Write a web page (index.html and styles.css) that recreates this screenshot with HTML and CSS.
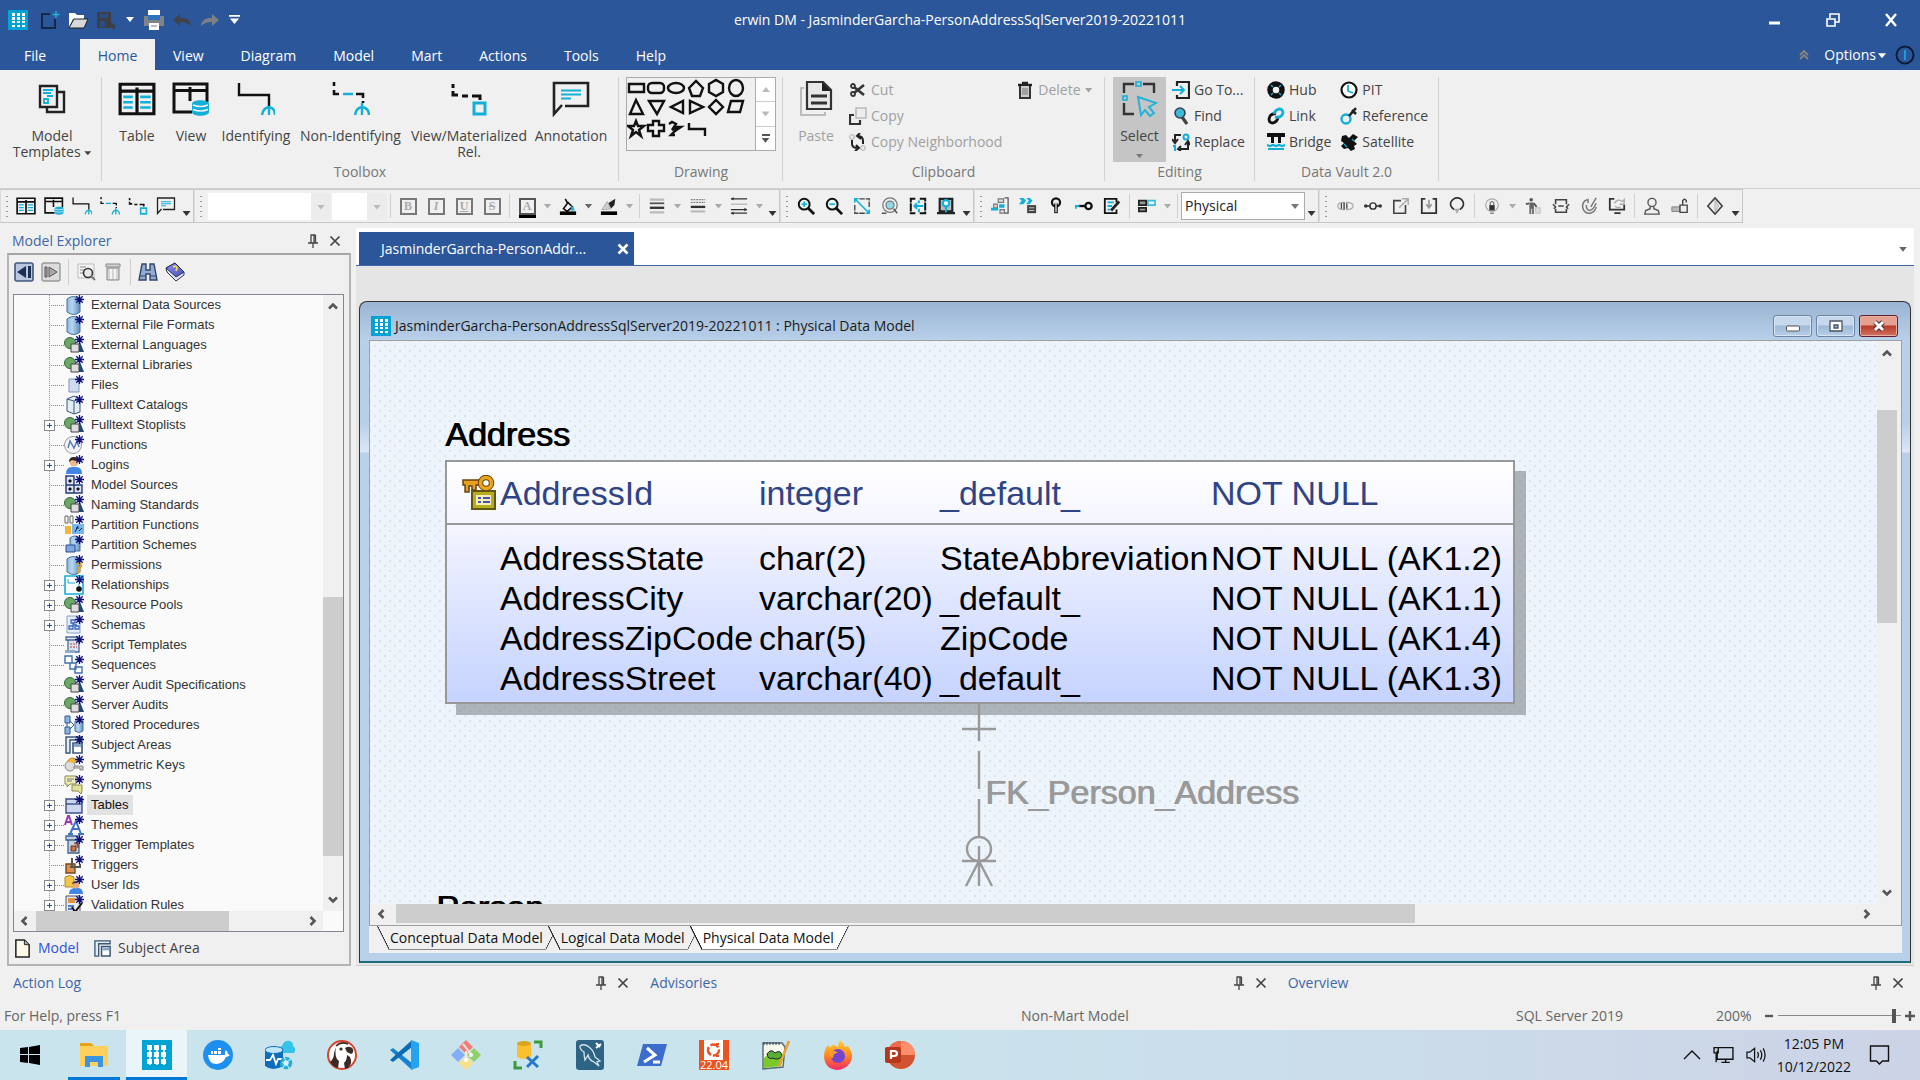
FILE: index.html
```html
<!DOCTYPE html>
<html lang="en">
<head>
<meta charset="utf-8">
<title>erwin DM - JasminderGarcha-PersonAddressSqlServer2019-20221011</title>
<link rel="stylesheet" href="styles.css">
</head>
<body>
<svg class="defs" aria-hidden="true">
  <defs>
    <linearGradient id="g-blue" x1="0" x2="1"><stop offset="0" stop-color="#8fb8dc"/><stop offset=".4" stop-color="#b5d6f0"/><stop offset="1" stop-color="#5f8fbf"/></linearGradient>
    <linearGradient id="g-book" x1="0" x2="1" y2="1"><stop offset="0" stop-color="#8b90ee"/><stop offset="1" stop-color="#4a50b8"/></linearGradient>
    <linearGradient id="g-fox" x1="0" x2="0" y2="1"><stop offset="0" stop-color="#ffd23a"/><stop offset=".5" stop-color="#ff8a1e"/><stop offset="1" stop-color="#f0296b"/></linearGradient>
  </defs>
  <symbol id="logo" viewBox="0 0 20 20"><path fill="#00a3d3" d="M0 0h20v20H0z"/><path fill="#fff" d="M4 3h3v3H4zM9 3h3v3H9zM14 3h3v3h-3zM4 7h3v3H4zM9 7h3v3H9zM14 7h3v3h-3zM4 11h3v2H4zM9 11h3v2H9zM14 11h3v2h-3zM4 15h3v2H4zM9 15h3v2H9zM14 15h3v2h-3z"/></symbol>
  <symbol id="pin" viewBox="0 0 12 14"><path d="M3.500 1h5M4 1v8M7 1v8M8.500 1v8M1 9h10M6 9v5" fill="none" stroke="#444" stroke-width="1.300"/></symbol>
  <symbol id="cross" viewBox="0 0 12 12"><path d="M1.500 1.500l9 9M10.500 1.500l-9 9" fill="none" stroke="currentColor" stroke-width="1.700"/></symbol>
  <symbol id="crossb" viewBox="0 0 12 12"><path d="M1.500 1.500l9 9M10.500 1.500l-9 9" fill="none" stroke="currentColor" stroke-width="2.600"/></symbol>
  <symbol id="chev" viewBox="0 0 12 12"><path d="M2 8.500l4-4 4 4" fill="none" stroke="#555" stroke-width="2.600"/></symbol>

  <symbol id="i-table" viewBox="0 0 36 32"><path d="M2 2h32v28H2zM2 8.500h32M18 5v24" fill="none" stroke="#111" stroke-width="3"/><path d="M5 14h9M5 19h9M5 24h9M21 14h10M21 19h10M21 24h10" stroke="#12b0d8" stroke-width="2.400"/></symbol>
  <symbol id="i-view" viewBox="0 0 38 34"><path d="M20 30H2V2h33v18M2 8.500h33M18 5v14" fill="none" stroke="#111" stroke-width="3"/><path d="M20 22c0-5 17-5 17 0v8c0 5-17 5-17 0z" fill="#12b0d8"/><path d="M21 23q7.500 3 15 0M21 27.500q7.500 3 15 0" fill="none" stroke="#f0f0f0" stroke-width="1.500"/></symbol>
  <symbol id="i-ident" viewBox="0 0 38 34"><path d="M2 1v12h30v11" fill="none" stroke="#111" stroke-width="2.400"/><path d="M32 24v9M25 33q1-7 7-8 6 1 6 8" fill="none" stroke="#12b0d8" stroke-width="2.400"/></symbol>
  <symbol id="i-nident" viewBox="0 0 38 34"><path d="M2 0v4M2 8v4h5M24 12h7v4M31 19v2" fill="none" stroke="#111" stroke-width="2.600"/><path d="M11 12h10M30 21v12M23 33q1-7 7-8 7 1 7 8" fill="none" stroke="#12b0d8" stroke-width="2.400"/></symbol>
  <symbol id="i-vrel" viewBox="0 0 38 34"><path d="M3 2v4M3 9v4h5M12 14h6M22 14h8v4" fill="none" stroke="#111" stroke-width="3"/><path d="M24 21h11v11H24z" fill="none" stroke="#12b0d8" stroke-width="3"/></symbol>
  <symbol id="i-note" viewBox="0 0 38 36"><path d="M13 25h23V2H2v31l8-9" fill="none" stroke="#222" stroke-width="2.600"/><path d="M9 9.500h20M9 13.500h20M9 17.500h10" stroke="#12b0d8" stroke-width="2"/></symbol>
  <symbol id="i-tmpl" viewBox="0 0 28 30"><path d="M2 2h17v21H2zM20 8h6v20H9v-5" fill="none" stroke="#222" stroke-width="2.400"/><path d="M5 6h10M5 9h8M9 12h6M6 15h4v4H6z" fill="none" stroke="#12b0d8" stroke-width="1.800"/></symbol>
  <symbol id="i-paste" viewBox="0 0 32 36"><path d="M4 7H1v27h24v-3" fill="none" stroke="#bbb" stroke-width="2"/><path d="M7 1h16l8 8v19H7z" fill="#e8e8e8" stroke="#333" stroke-width="2.200"/><path d="M22 1v9h9z" fill="#222"/><path d="M11 15h16M11 22h16" stroke="#333" stroke-width="3"/></symbol>
  <symbol id="i-cut" viewBox="0 0 18 18"><path d="M5 6l10 8M5 12l10-8" stroke="#333" stroke-width="2.600"/><circle cx="4" cy="5" r="2" fill="none" stroke="#333" stroke-width="1.800"/><circle cx="4" cy="13" r="2" fill="none" stroke="#333" stroke-width="1.800"/></symbol>
  <symbol id="i-copy" viewBox="0 0 18 18"><path d="M7 1h10v10H7z" fill="#eee" stroke="#bbb" stroke-width="1.600"/><path d="M5 8H1v9h10v-4" fill="none" stroke="#333" stroke-width="2.200"/></symbol>
  <symbol id="i-copyn" viewBox="0 0 18 18"><path d="M3 7v4q0 4 6 4M7 12l3 3-4 3M14 11V8q0-5-5-5M11 0L8 3l4 3" fill="none" stroke="#222" stroke-width="2"/><circle cx="3" cy="4" r="2.300" fill="none" stroke="#aaa"/><circle cx="14" cy="15" r="2.300" fill="none" stroke="#aaa"/></symbol>
  <symbol id="i-trash" viewBox="0 0 16 18"><path d="M1 4h14M5 2h6" stroke="#222" stroke-width="2.400"/><path d="M3 5v12h10V5" fill="#ccc" stroke="#333" stroke-width="2"/><path d="M6 7v7M8 7v7M10 7v7" stroke="#777"/></symbol>
  <symbol id="i-select" viewBox="0 0 36 36"><path d="M2 12V3h10M21 3h11v9M2 22v11h10" fill="none" stroke="#333" stroke-width="2.400"/><path d="M14 1h5v4h-5zM1 15h4v4H1z" fill="none" stroke="#12b0d8" stroke-width="1.600"/><path d="M16 16l18 6-7 4 5 6-4 3-5-6-4 5z" fill="none" stroke="#25b3d8" stroke-width="2"/></symbol>
  <symbol id="i-goto" viewBox="0 0 18 18"><path d="M5 5V1h12v16H5v-3" fill="none" stroke="#222" stroke-width="2.200"/><path d="M0 9h12M8 5l4 4-4 4" fill="none" stroke="#12b0d8" stroke-width="2"/></symbol>
  <symbol id="i-find" viewBox="0 0 18 18"><circle cx="8" cy="6" r="5" fill="#40b8d8" stroke="#345" stroke-width="1.600"/><path d="M10 10l5 7" stroke="#444" stroke-width="3.200"/></symbol>
  <symbol id="i-repl" viewBox="0 0 18 18"><path d="M9 2H3v6M0 6l3 4 3-4M8 16h8v-6M13 12l3-4 2 4M9 13l-3 3 3 2" fill="none" stroke="#222" stroke-width="2"/><circle cx="14" cy="4" r="2.500" fill="none" stroke="#12b0d8" stroke-width="2"/><path d="M3 12v6M1 13h2" fill="none" stroke="#12b0d8" stroke-width="2"/></symbol>
  <symbol id="i-hub" viewBox="0 0 18 18"><circle cx="9" cy="9" r="6" fill="none" stroke="#111" stroke-width="5.500"/><path d="M4 4l2 2M14 4l-2 2M4 14l2-2M14 14l-2-2" stroke="#12b0d8" stroke-width="1.400"/></symbol>
  <symbol id="i-link" viewBox="0 0 18 18"><path d="M9 7q-4-1-6 2l-1 3q0 4 4 4 4-1 5-5" fill="none" stroke="#111" stroke-width="2.800"/><path d="M8 10q5 1 7-2l1-2q0-4-4-4-4 1-5 5" fill="none" stroke="#12b0d8" stroke-width="2.800"/></symbol>
  <symbol id="i-bridge" viewBox="0 0 18 18"><path d="M0 0h18v4H0zM4 4h3v6H4zM11 4h3v6h-3z" fill="#111"/><path d="M0 12l3 1 3-1 3 1 3-1 3 1 3-1M1 16h16" fill="none" stroke="#12b0d8" stroke-width="2.200"/></symbol>
  <symbol id="i-pit" viewBox="0 0 18 18"><circle cx="9" cy="9" r="7.500" fill="#fff" stroke="#111" stroke-width="2.200"/><path d="M8 4v6l5 2" fill="none" stroke="#12b0d8" stroke-width="1.800"/></symbol>
  <symbol id="i-ref" viewBox="0 0 18 18"><circle cx="6" cy="12" r="4.500" fill="none" stroke="#12b0d8" stroke-width="2.400"/><path d="M9 9l7-8M12 3l4 4" stroke="#222" stroke-width="2.600"/></symbol>
  <symbol id="i-sat" viewBox="0 0 18 18"><path d="M2 3l4-1 3 3 4-4 5 3-4 4 3 3-3 2 1 3-4 2-3-3-4 1-3-3 3-3-3-2z" fill="#111"/><path d="M4 11l3 3M12 6l2 2" stroke="#12b0d8" stroke-width="1.200"/></symbol>

  <symbol id="s-mag" viewBox="0 0 20 20"><circle cx="8" cy="8" r="6" fill="#e8f6fb" stroke="#111" stroke-width="2.200"/><path d="M12 12l7 7" stroke="#111" stroke-width="3"/><path d="M5 8h6" stroke="#12b0d8" stroke-width="1.800"/></symbol>
  <symbol id="s-frame" viewBox="0 0 20 20"><path d="M7 2h11v10M2 9v9h11" fill="none" stroke="#444" stroke-width="1.500" stroke-dasharray="6 1"/><path d="M2 2l16 16M2 6V2h4M18 14v4h-4" fill="none" stroke="#12b0d8" stroke-width="1.800"/></symbol>
  <symbol id="s-fit" viewBox="0 0 20 20"><circle cx="10" cy="9" r="8" fill="none" stroke="#777" stroke-width="1.400"/><circle cx="10" cy="9" r="4.500" fill="#8fd8ec" stroke="#777" stroke-width="1.300"/><path d="M14 13l4 5M1 18h5" stroke="#555" stroke-width="1.600"/></symbol>
  <symbol id="s-pan" viewBox="0 0 20 20"><path d="M7 2H2v16h5M12 2h6v16h-6" fill="none" stroke="#111" stroke-width="2.200" stroke-dasharray="9 1"/><path d="M16 10H6M9 7l-3 3 3 3M11 4v3M11 13v4" fill="none" stroke="#12b0d8" stroke-width="2.200"/></symbol>
  <symbol id="s-over" viewBox="0 0 20 20"><path d="M3 2h14v14H3zM0 18h20" fill="#bbb" stroke="#222" stroke-width="2.400"/><circle cx="10" cy="7" r="3.600" fill="#fff" stroke="#12b0d8" stroke-width="2.400"/><path d="M10 11v6" stroke="#12b0d8" stroke-width="2.400"/></symbol>
  <symbol id="s-lines" viewBox="0 0 20 20"><path d="M2 3h16M2 17h16" stroke="#bbb" stroke-width="2.400"/><path d="M2 7h16" stroke="#555" stroke-width="2"/><path d="M2 12h16" stroke="#333" stroke-width="2.600"/></symbol>
  <symbol id="s-dash" viewBox="0 0 20 20"><path d="M2 3h16M2 6h16" stroke="#555" stroke-dasharray="2 1"/><path d="M2 11h16" stroke="#333" stroke-width="2.600"/><path d="M2 16h16" stroke="#bbb" stroke-width="2.400"/></symbol>
  <symbol id="s-arrows" viewBox="0 0 20 20"><path d="M1 2h18M1 14h18M1 18h18" stroke="#333" stroke-width="1.400"/><path d="M1 8h18" stroke="#bbb" stroke-width="1.600"/><path d="M1 2l3-2v4zM19 14l-3-2v4zM1 18l3-2v4z" fill="#333"/></symbol>
  <symbol id="s-tree" viewBox="0 0 20 20"><path d="M8 2h6v4H8zM3 8h4v4H3zM10 14h5v4h-5z" fill="#ddd" stroke="#777" stroke-width="1.300"/><path d="M15 1h4v17h-4" fill="none" stroke="#555" stroke-width="1.400"/><path d="M9 8h6v4H9zM0 12h8v3H0z" fill="#12b0d8"/></symbol>
  <symbol id="s-trans" viewBox="0 0 20 20"><path d="M0 1h5l3 3-3 4H0l3-4zM8 1h4l3 3-3 4H8l3-4z" fill="#12b0d8"/><path d="M9 9h10v9H9z" fill="#444"/><path d="M11 12h6M11 15h6" stroke="#ccc"/></symbol>
  <symbol id="s-keyv" viewBox="0 0 20 20"><circle cx="10" cy="6" r="4.500" fill="none" stroke="#111" stroke-width="2.400"/><path d="M10 7v11" stroke="#111" stroke-width="4"/><path d="M10 5v12" stroke="#ddd" stroke-width="1.500"/></symbol>
  <symbol id="s-keyh" viewBox="0 0 20 20"><circle cx="15" cy="10" r="3.500" fill="none" stroke="#111" stroke-width="2.600"/><path d="M4 10h8" stroke="#111" stroke-width="2.600"/><path d="M1 13v-3h4" fill="none" stroke="#12b0d8" stroke-width="2"/></symbol>
  <symbol id="s-edit" viewBox="0 0 20 20"><path d="M15 6V2H2v16h13v-4" fill="none" stroke="#111" stroke-width="2"/><path d="M5 6h7M5 10h5M5 14h3" stroke="#12b0d8" stroke-width="2"/><path d="M9 15l9-10" stroke="#222" stroke-width="3"/></symbol>
  <symbol id="s-align" viewBox="0 0 20 20"><path d="M1 4h8v5H1zM1 12h8v4H1z" fill="#999" stroke="#222" stroke-width="2"/><path d="M11 4h8v5h-8z" fill="#e8f8fc" stroke="#3abbe0" stroke-width="1.800"/></symbol>
  <symbol id="s-toggle" viewBox="0 0 20 20"><path d="M9 6Q2 6 2 10t7 4zM11 6q8 0 8 4t-8 4" fill="none" stroke="#aaa" stroke-width="1.300"/><path d="M6 7v6M9 6v8M12 7v6" stroke="#444" stroke-width="1.400"/></symbol>
  <symbol id="s-node" viewBox="0 0 20 20"><circle cx="10" cy="10" r="3.500" fill="none" stroke="#333" stroke-width="1.600"/><path d="M3 10h4M13 10h4" stroke="#333" stroke-width="1.600"/><circle cx="2" cy="10" r="2" fill="#333"/><circle cx="18" cy="10" r="2" fill="#333"/></symbol>
  <symbol id="s-out" viewBox="0 0 20 20"><path d="M10 4H2v14h13V9" fill="none" stroke="#444" stroke-width="1.800"/><path d="M8 12l9-9M11 2h7v7" fill="none" stroke="#aaa" stroke-width="1.600"/></symbol>
  <symbol id="s-in" viewBox="0 0 20 20"><path d="M6 2H2v16h16V2h-4" fill="none" stroke="#333" stroke-width="2"/><path d="M10 3v8M7 8l3 4 3-4" fill="none" stroke="#999" stroke-width="1.800"/></symbol>
  <symbol id="s-bulb" viewBox="0 0 20 20"><path d="M7 14Q2 11 3 6q3-5 7-5 5 0 7 5 1 5-4 8" fill="none" stroke="#333" stroke-width="1.800"/><path d="M7 13h6l-3 6z" fill="#aaa"/></symbol>
  <symbol id="s-lock" viewBox="0 0 20 20"><circle cx="10" cy="9" r="7" fill="none" stroke="#aaa" stroke-width="1.300"/><path d="M7 9h6v6H7z" fill="#333"/><path d="M8 9V6q2-2 4 0v3M8 18h4" fill="none" stroke="#444"/></symbol>
  <symbol id="s-man" viewBox="0 0 20 20"><circle cx="8" cy="3" r="2" fill="#555"/><path d="M6 6h5v13H9v-6H8v6H6z" fill="#666"/><path d="M2 8l4-1M11 7l3 4" stroke="#555" stroke-width="2"/><path d="M13 12h5v6h-5z" fill="#ddd" stroke="#bbb"/></symbol>
  <symbol id="s-print" viewBox="0 0 20 20"><path d="M4 8V3h12v5M4 13v4h12v-4" fill="none" stroke="#444" stroke-width="1.800"/><path d="M1 8l3 3-2 2M19 8l-3 3 2 2M7 10h6" fill="none" stroke="#444" stroke-width="1.600"/></symbol>
  <symbol id="s-spiral" viewBox="0 0 20 20"><path d="M8 3Q2 5 3 12q2 7 9 6 5-2 6-7M7 9q0 6 4 6 4-1 7-8M9 2v5M12 11l6-10" fill="none" stroke="#777" stroke-width="1.600"/></symbol>
  <symbol id="s-mon" viewBox="0 0 20 20"><path d="M7 2H2v12h16V8M7 18h7" fill="none" stroke="#333" stroke-width="2"/><path d="M7 7q4-6 9-2l2-2v5h-5M14 11q-4 2-6-1" fill="none" stroke="#aaa" stroke-width="1.500"/></symbol>
  <symbol id="s-user" viewBox="0 0 20 20"><circle cx="10" cy="6" r="4.500" fill="none" stroke="#555" stroke-width="1.500"/><path d="M8 10v3l-5 2-1 4h16l-1-4-5-2v-3" fill="none" stroke="#555" stroke-width="1.500"/></symbol>
  <symbol id="s-unlock" viewBox="0 0 20 20"><path d="M1 11h9v5H1z" fill="#bbb" stroke="#777"/><path d="M10 9h8v8h-8z" fill="#eee" stroke="#444" stroke-width="1.500"/><path d="M13 9V4q2-3 4 0v2" fill="none" stroke="#444" stroke-width="1.600"/></symbol>
  <symbol id="s-dia" viewBox="0 0 20 20"><path d="M10 1l8 9-8 9-8-9z" fill="none" stroke="#444" stroke-width="1.800"/><path d="M10 4v12l4-6z" fill="#ddd" stroke="#aaa"/></symbol>
  <symbol id="s-fill" viewBox="0 0 20 20"><path d="M7 2l3 6M5 13l5-7 5 5-6 5z" fill="none" stroke="#111" stroke-width="1.800"/><path d="M14 9l4 6h-5z" fill="#12b0d8"/><path d="M1 18h18" stroke="#000" stroke-width="4"/></symbol>
  <symbol id="s-brush" viewBox="0 0 20 20"><path d="M9 7l8-5-1 7-4 4z" fill="#222"/><path d="M2 14l6-9 4 8-4 1z" fill="#ccc" stroke="#aaa"/><path d="M1 18h18" stroke="#000" stroke-width="4"/></symbol>

  <symbol id="star" viewBox="0 0 20 20"><path d="M15.500 0v9M11 4.500h9M12.300 1.300l6.400 6.400M18.700 1.300l-6.400 6.400" stroke="#10107a" stroke-width="1.300"/></symbol>
  <symbol id="t-db" viewBox="0 0 20 20"><path d="M3 4q6-5 13 0v13q-6 5-13 0z" fill="url(#g-blue)" stroke="#47709b"/></symbol>
  <symbol id="t-obj" viewBox="0 0 20 20"><path d="M13 17l3-10 4 10z" fill="#1f4a78"/><circle cx="6" cy="8" r="5.500" fill="#6aa768" stroke="#2c6a35"/><path d="M7 9h8v8H7z" fill="#ddd" stroke="#444"/></symbol>
  <symbol id="t-file" viewBox="0 0 20 20"><path d="M5 4h10v13H5z" fill="#cfdcf0" stroke="#7d95b8"/></symbol>
  <symbol id="t-book" viewBox="0 0 20 20"><path d="M3 4l7-3 6 3v13l-6 2-7-3z" fill="#e4edf5" stroke="#355a78"/><path d="M10 6v13M3 4l7 2 6-2" fill="none" stroke="#355a78"/></symbol>
  <symbol id="t-fn" viewBox="0 0 20 20"><circle cx="9" cy="10" r="8.500" fill="#f4f4f8" stroke="#999"/><path d="M4 13l2-7 4 7 3-7 2 6" fill="none" stroke="#5b7eb0" stroke-width="1.500"/></symbol>
  <symbol id="t-user" viewBox="0 0 20 20"><path d="M2 19q0-7 6-7h4q6 0 6 7z" fill="#3f86e8"/><circle cx="10" cy="7" r="4.500" fill="#edb98c"/><path d="M5 7q0-5 5-5t5 4q-5 0-7-1z" fill="#352018"/></symbol>
  <symbol id="t-src" viewBox="0 0 20 20"><path d="M2 1h8v9H2zM2 10h8v8H2zM10 10h8v8h-8z" fill="#dfe5f5" stroke="#223a78" stroke-width="1.400"/><path d="M5 5h2v2H5zM5 13h2v2H5zM13 13h2v2h-2z" fill="#111" stroke="#111"/></symbol>
  <symbol id="t-pfn" viewBox="0 0 20 20"><path d="M1 1h3v7H1zM6 1h3v7H6z" fill="none" stroke="#666"/><path d="M1 11h6v8H1z" fill="#f0b63a"/><path d="M8 9h12v10H8z" fill="#78b6ee"/><path d="M11 17l3-6M12 13h3M15 16l3-3" stroke="#124"/></symbol>
  <symbol id="t-psc" viewBox="0 0 20 20"><path d="M6 3q5-4 10 0v13H6z" fill="url(#g-blue)" stroke="#47709b"/><path d="M2 10h9v7H2z" fill="#7fa6e0" stroke="#264c94"/></symbol>
  <symbol id="t-key" viewBox="0 0 20 20"><circle cx="6" cy="11" r="5" fill="#ddd" stroke="#888"/><path d="M3 7q4-7 10-2l-2 3" fill="#f0b63a" stroke="#b8852a"/><path d="M10 11h9v4h-3v-2h-6z" fill="#ccc" stroke="#888"/></symbol>
  <symbol id="t-rel" viewBox="0 0 20 20"><path d="M1 1h18v18H1z" fill="#fff" stroke="#12b0d8" stroke-width="1.600"/><path d="M4 4v4h7M15 9v4" fill="none" stroke="#12b0d8"/><circle cx="15" cy="14" r="2.800" fill="#111"/></symbol>
  <symbol id="t-sch" viewBox="0 0 20 20"><path d="M3 1h13v17H3z" fill="#e8edf8" stroke="#8aa0c8"/><path d="M7 5h4v3H7zM5 11h4v3H5zM11 11h4v3h-4zM9 8v2h4" fill="none" stroke="#3a6ac0" stroke-width="1.300"/></symbol>
  <symbol id="t-scr" viewBox="0 0 20 20"><path d="M2 2h12v3H2zM4 5h11v12H4z" fill="#dbe3ee" stroke="#4a6a94" stroke-width="1.300"/><path d="M6 9h7M6 12h7" stroke="#c03a3a" stroke-dasharray="2 1"/><path d="M1 15h10v3H1z" fill="#8fabcf"/></symbol>
  <symbol id="t-seq" viewBox="0 0 20 20"><path d="M1 1h7v7H1zM6 8v6h6V8zM11 12h7v6h-7z" fill="#fff" stroke="#3f70ac" stroke-width="1.400"/></symbol>
  <symbol id="t-proc" viewBox="0 0 20 20"><path d="M1 1h5v7H1zM1 12h5v7H1z" fill="#8ab4e0" stroke="#2c5a94"/><path d="M3 8v4M6 6l4 4-4 4" fill="none" stroke="#2c5a94"/><path d="M11 6h8v10q-4 3-8 0z" fill="url(#g-blue)" stroke="#47709b"/></symbol>
  <symbol id="t-area" viewBox="0 0 20 20"><path d="M2 18V2h16v3H6v13z" fill="#e4ebf3" stroke="#3b5878" stroke-width="1.400"/><path d="M9 8h9v10H9z" fill="#fff" stroke="#3b5878" stroke-width="1.600"/><path d="M10 9h7v3h-7z" fill="#8aa6c6"/></symbol>
  <symbol id="t-syn" viewBox="0 0 20 20"><path d="M1 1h11v8H6l-3 3V9H1z" fill="#f0efb8" stroke="#8a8a50"/><path d="M8 10h10v6l-1 3-3-3H8z" fill="#e2e398" stroke="#8a8a50"/><path d="M3 4h7M3 6h5" stroke="#777"/></symbol>
  <symbol id="t-tab" viewBox="0 0 20 20"><path d="M2 4h16v14H2z" fill="#ccd8f2" stroke="#3c4f88" stroke-width="1.400"/><path d="M2 9h16" stroke="#3c4f88" stroke-width="1.400"/></symbol>
  <symbol id="t-theme" viewBox="0 0 20 20"><path d="M1 10l3-9h1l3 9M2 7h5" fill="none" stroke="#9b3ab0" stroke-width="2"/><path d="M6 19l6-13 5 13M8 14h8M4 19h5M14 19h6" fill="none" stroke="#3f74c8" stroke-width="2"/></symbol>
  <symbol id="t-trt" viewBox="0 0 20 20"><path d="M2 1h12v4H2zM4 5h11v13H4z" fill="#c4d2e4" stroke="#3f628e" stroke-width="1.300"/><path d="M7 11h5v5H7zM10 8h4v5" fill="#c8763a" stroke="#633"/></symbol>
  <symbol id="t-tr" viewBox="0 0 20 20"><path d="M2 9h9v9H2z" fill="#dd9050" stroke="#7a4620" stroke-width="1.400"/><path d="M8 3v9h8V9M6 12h4" fill="none" stroke="#555" stroke-width="2"/></symbol>
  <symbol id="t-uid" viewBox="0 0 20 20"><path d="M1 2q5-3 9 0v10H1z" fill="#f2c64a" stroke="#b08a28"/><path d="M5 19q0-5 5-6h5q4 1 4 6z" fill="#3f86e8"/><circle cx="12" cy="10" r="3.500" fill="#e8a878"/><path d="M8 9q1-4 7-2z" fill="#432"/></symbol>
  <symbol id="t-val" viewBox="0 0 20 20"><path d="M2 1h14v17H2z" fill="#e6eaf0" stroke="#456"/><path d="M4 3h7v5H4z" fill="#e09040"/><path d="M4 11h6M4 14h4" stroke="#4f7fc0" stroke-width="2"/><path d="M8 12l3 5 7-9" fill="none" stroke="#111" stroke-width="2"/></symbol>
</svg>

<header class="titlebar">
  <div class="quick">
    <svg class="q-logo"><use href="#logo"/></svg>
    <button aria-label="New"><svg viewBox="0 0 20 20"><path d="M10 4H2v14h13V9" fill="none" stroke="#13284a" stroke-width="2"/><path d="M16 1v7M12.500 4.500h7" stroke="#28b5d8" stroke-width="1.400"/></svg></button>
    <button aria-label="Open"><svg viewBox="0 0 20 20"><path d="M1 3h6l2 2h7v4H5L1 17z" fill="#fff"/><path d="M6 9h14l-4 9H1z" fill="#d8d8d8" stroke="#222"/></svg></button>
    <button aria-label="Save"><svg viewBox="0 0 20 20"><path d="M1 2h14v16H1z" fill="#3d3f44"/><path d="M4 4h8v4H4zM4 11h5v6H4z" fill="#2a4d85"/><path d="M11 11l8 7" stroke="#3d3f44" stroke-width="4"/></svg></button>
    <button class="q-arrow" aria-label="Save options"><span class="tri"></span></button>
    <button aria-label="Print"><svg viewBox="0 0 20 20"><path d="M4 0h12v7H4z" fill="#fff"/><path d="M0 6h20v10H0z" fill="#808285"/><path d="M4 5h12v5H4z" fill="#2b73be"/><path d="M5 13h10v7H5z" fill="#fff"/><path d="M7 16h6" stroke="#777"/></svg></button>
    <button aria-label="Undo"><svg viewBox="0 0 20 20"><path d="M8 4v4q10-1 11 8-4-4-11-4v4L1 10z" fill="#404246"/></svg></button>
    <button aria-label="Redo"><svg viewBox="0 0 20 20"><path d="M12 4v4Q2 7 1 16q4-4 11-4v4l7-6z" fill="#7c8085"/></svg></button>
    <button class="q-arrow" aria-label="Customize"><svg viewBox="0 0 12 12"><path d="M0 1h12v2H0zM1 5h10l-5 6z" fill="#fff"/></svg></button>
  </div>
  <h1>erwin DM - JasminderGarcha-PersonAddressSqlServer2019-20221011</h1>
  <div class="winctl">
    <button aria-label="Minimize"><svg viewBox="0 0 14 14"><path d="M1 10h11" stroke="#fff" stroke-width="3"/></svg></button>
    <button aria-label="Restore"><svg viewBox="0 0 14 14"><path d="M1 6h8v7H1zM4 5V1h9v8H9" fill="none" stroke="#fff" stroke-width="1.600"/></svg></button>
    <button aria-label="Close"><svg viewBox="0 0 14 14"><path d="M2 1l10 12M12 1L2 13" stroke="#fff" stroke-width="2.400"/></svg></button>
  </div>
</header>

<nav class="menu">
  <button class="file">File</button><button class="on">Home</button><button>View</button><button>Diagram</button><button>Model</button><button>Mart</button><button>Actions</button><button>Tools</button><button>Help</button>
  <div class="menu-end">
    <svg class="up" viewBox="0 0 10 10"><path d="M1 5l4-4 4 4M1 9l4-4 4 4" fill="none" stroke="#8a857c" stroke-width="1.800"/></svg>
    <button class="options">Options<span class="tri"></span></button>
    <svg class="info" viewBox="0 0 20 20"><circle cx="10" cy="10" r="8.500" fill="none" stroke="#0b1c38" stroke-width="2"/><path d="M10 5v10" stroke="#12a0d8" stroke-width="2"/></svg>
  </div>
</nav>

<section class="ribbon">
  <div class="group g-model"><div class="items">
    <button class="big"><svg class="sm"><use href="#i-tmpl"/></svg><span>Model<br>Templates <i class="tri"></i></span></button>
  </div></div>
  <div class="group g-tool"><div class="items">
    <button class="big w1"><svg><use href="#i-table"/></svg><span>Table</span></button>
    <button class="big w2"><svg><use href="#i-view"/></svg><span>View</span></button>
    <button class="big w3"><svg><use href="#i-ident"/></svg><span>Identifying</span></button>
    <button class="big w4"><svg><use href="#i-nident"/></svg><span>Non-Identifying</span></button>
    <button class="big w5"><svg><use href="#i-vrel"/></svg><span>View/Materialized<br>Rel.</span></button>
    <button class="big w6"><svg><use href="#i-note"/></svg><span>Annotation</span></button>
  </div><h2>Toolbox</h2></div>
  <div class="group g-draw"><div class="gallery">
    <svg class="shapes" viewBox="0 0 128 72" fill="none" stroke="#111" stroke-width="2.400"><path d="M2 6h15v8H2zM62 10l7-7 7 7-3 8h-8zM82 6l7-4 7 4v8l-7 4-7-4zM3 36l6-14 7 14zM22 23h15l-7 13zM56 23v12l-12-6zM63 23v12l13-6zM89 22l7 7-7 7-7-7zM104 23h12l-3 11h-12zM9 43l2 5h6l-5 4 2 6-5-4-5 4 2-6-5-4h6zM26 43h6v4h5v6h-5v5h-6v-5h-5v-6h5zM42 46l3-2 4 2-4 6 5-3 4 0-6 4-4 4 4 0M62 45v6h16v7"/><rect x="21" y="5" width="16" height="10" rx="4"/><ellipse cx="49" cy="10" rx="8" ry="5"/><ellipse cx="109" cy="10" rx="7" ry="8"/></svg>
    <div class="spin"><button aria-label="Previous shapes"><i class="tri rise"></i></button><button aria-label="Next shapes"><i class="tri"></i></button><button aria-label="All shapes" class="all"><i class="tri"></i></button></div>
  </div><h2>Drawing</h2></div>
  <div class="group g-clip"><div class="items">
    <button class="big off w7"><svg><use href="#i-paste"/></svg><span>Paste</span></button>
    <div class="stack off">
      <button><svg><use href="#i-cut"/></svg>Cut</button>
      <button><svg><use href="#i-copy"/></svg>Copy</button>
      <button><svg><use href="#i-copyn"/></svg>Copy Neighborhood</button>
    </div>
    <div class="stack off"><button><svg><use href="#i-trash"/></svg>Delete <i class="tri"></i></button></div>
  </div><h2>Clipboard</h2></div>
  <div class="group g-edit"><div class="items">
    <button class="big sel"><svg><use href="#i-select"/></svg><span>Select</span><i class="tri"></i></button>
    <div class="stack">
      <button><svg><use href="#i-goto"/></svg>Go To...</button>
      <button><svg><use href="#i-find"/></svg>Find</button>
      <button><svg><use href="#i-repl"/></svg>Replace</button>
    </div>
  </div><h2>Editing</h2></div>
  <div class="group g-vault"><div class="items">
    <div class="stack first">
      <button><svg><use href="#i-hub"/></svg>Hub</button>
      <button><svg><use href="#i-link"/></svg>Link</button>
      <button><svg><use href="#i-bridge"/></svg>Bridge</button>
    </div>
    <div class="stack">
      <button><svg><use href="#i-pit"/></svg>PIT</button>
      <button><svg><use href="#i-ref"/></svg>Reference</button>
      <button><svg><use href="#i-sat"/></svg>Satellite</button>
    </div>
  </div><h2>Data Vault 2.0</h2></div>
</section>

<div class="toolbars">
  <div class="bar"><i class="grip"></i>
    <button aria-label="Table"><svg><use href="#i-table"/></svg></button><button aria-label="View"><svg><use href="#i-view"/></svg></button><button aria-label="Identifying"><svg><use href="#i-ident"/></svg></button><button aria-label="Non-identifying"><svg><use href="#i-nident"/></svg></button><button aria-label="View relationship"><svg><use href="#i-vrel"/></svg></button><button aria-label="Annotation"><svg><use href="#i-note"/></svg></button><button class="more" aria-label="More"></button>
  </div>
  <div class="bar"><i class="grip"></i>
    <span class="combo c-font"><select aria-label="Font"><option></option></select></span><span class="combo c-size"><select aria-label="Font size"><option></option></select></span>
    <i class="sep"></i>
    <button class="ltr" aria-label="Bold"><b>B</b></button><button class="ltr" aria-label="Italic"><em>I</em></button><button class="ltr" aria-label="Underline"><span>U</span></button><button class="ltr" aria-label="Strikethrough"><s>S</s></button>
    <i class="sep"></i>
    <button class="ltr ink" aria-label="Text color"><span>A</span></button><button class="dd" aria-label="Text colors"></button>
    <button aria-label="Fill color"><svg><use href="#s-fill"/></svg></button><button class="dd dark" aria-label="Fill colors"></button>
    <button aria-label="Line color"><svg><use href="#s-brush"/></svg></button><button class="dd" aria-label="Line colors"></button>
    <i class="sep"></i>
    <button aria-label="Line width"><svg><use href="#s-lines"/></svg></button><button class="dd" aria-label="Line widths"></button>
    <button aria-label="Line style"><svg><use href="#s-dash"/></svg></button><button class="dd" aria-label="Line styles"></button>
    <button aria-label="Arrows"><svg><use href="#s-arrows"/></svg></button><button class="dd" aria-label="Arrow styles"></button><button class="more" aria-label="More"></button>
  </div>
  <div class="bar"><i class="grip"></i>
    <button aria-label="Zoom in"><svg viewBox="0 0 20 20"><use href="#s-mag" width="20" height="20"/><path d="M8 5v6" stroke="#12b0d8" stroke-width="1.800"/></svg></button><button aria-label="Zoom out"><svg><use href="#s-mag"/></svg></button><button aria-label="Zoom area"><svg><use href="#s-frame"/></svg></button><button aria-label="Zoom fit"><svg><use href="#s-fit"/></svg></button><button aria-label="Pan"><svg><use href="#s-pan"/></svg></button><button aria-label="Overview"><svg><use href="#s-over"/></svg></button><button class="more" aria-label="More"></button>
  </div>
  <div class="bar"><i class="grip"></i>
    <button aria-label="Hierarchy"><svg><use href="#s-tree"/></svg></button><button aria-label="Transform"><svg><use href="#s-trans"/></svg></button><button aria-label="Primary key"><svg><use href="#s-keyv"/></svg></button><button aria-label="Foreign key"><svg><use href="#s-keyh"/></svg></button><button aria-label="Edit"><svg><use href="#s-edit"/></svg></button>
    <i class="sep"></i>
    <button aria-label="Align"><svg><use href="#s-align"/></svg></button><button class="dd" aria-label="Align options"></button>
    <i class="sep"></i>
    <span class="combo c-mode"><select aria-label="Model type"><option>Physical</option></select></span><button class="more" aria-label="More"></button>
  </div>
  <div class="bar"><i class="grip"></i>
    <button aria-label="Toggle"><svg><use href="#s-toggle"/></svg></button><button aria-label="Node"><svg><use href="#s-node"/></svg></button><button aria-label="Check out"><svg><use href="#s-out"/></svg></button><button aria-label="Check in"><svg><use href="#s-in"/></svg></button><button aria-label="Hint"><svg><use href="#s-bulb"/></svg></button>
    <i class="sep"></i>
    <button aria-label="Lock"><svg><use href="#s-lock"/></svg></button><button class="dd" aria-label="Lock options"></button><button aria-label="Session"><svg><use href="#s-man"/></svg></button><button aria-label="Print"><svg><use href="#s-print"/></svg></button><button aria-label="Refresh"><svg><use href="#s-spiral"/></svg></button><button aria-label="Monitor"><svg><use href="#s-mon"/></svg></button>
    <i class="sep"></i>
    <button aria-label="User"><svg><use href="#s-user"/></svg></button><button aria-label="Unlock"><svg><use href="#s-unlock"/></svg></button>
    <i class="sep"></i>
    <button aria-label="Mart"><svg><use href="#s-dia"/></svg></button><button class="more" aria-label="More"></button>
  </div>
</div>

<main class="work">
  <aside class="explorer">
    <div class="dock-head"><h2>Model Explorer</h2><button aria-label="Pin"><svg><use href="#pin"/></svg></button><button aria-label="Close"><svg><use href="#cross"/></svg></button></div>
    <div class="panel">
      <div class="ptools">
        <button class="nav" aria-label="Back"><svg viewBox="0 0 20 20"><rect x="1" y="1" width="18" height="18" rx="2" fill="#b9c6dd" stroke="#42587e" stroke-width="1.600"/><path d="M12 4v12l-9-6zM14 4h3v12h-3z" fill="#1d2f56"/></svg></button>
        <button class="nav" aria-label="Forward"><svg viewBox="0 0 20 20"><rect x="1" y="1" width="18" height="18" rx="2" fill="#dcdcdc" stroke="#999" stroke-width="1.400"/><path d="M8 5v10l8-5zM4 5h2v10H4z" fill="#aaa" stroke="#555"/></svg></button>
        <i class="sep"></i>
        <button aria-label="Find"><svg viewBox="0 0 20 20"><path d="M2 2h16v14H2z" fill="#f4f4f4" stroke="#bbb"/><path d="M4 5h6M4 8h4M4 11h3" stroke="#888"/><circle cx="12" cy="11" r="4.500" fill="#e8e8e8" stroke="#333" stroke-width="1.600"/><path d="M15 14l4 4" stroke="#777" stroke-width="2"/></svg></button>
        <button aria-label="Delete"><svg viewBox="0 0 20 20"><path d="M3 2h14v3H3zM4 6h12v12H4z" fill="#d4d4d4" stroke="#888"/><path d="M8 7v10M12 7v10" stroke="#f4f4f4" stroke-width="2"/></svg></button>
        <i class="sep"></i>
        <button aria-label="Search"><svg viewBox="0 0 20 20"><path d="M4 2h4v6h4V2h4l3 16h-7v-6H8v6H1z" fill="#93abd0" stroke="#33476e" stroke-width="1.400"/><path d="M1 14h7M12 14h7" stroke="#33476e"/></svg></button>
        <button aria-label="Help"><svg viewBox="0 0 20 20"><path d="M1 6l9-5 9 9v3l-8 6-9-9z" fill="#e8e8f0" stroke="#25305c"/><path d="M1 6l9-5 9 9-8 5z" fill="url(#g-book)" stroke="#25305c"/><path d="M8 5q3-2 4 1l-1 3" fill="none" stroke="#ffe04a" stroke-width="1.600"/></svg></button>
      </div>
      <div class="treebox">
        <ul class="tree">
          <li><i class="twig"></i><svg><use href="#t-db"/><use href="#star"/></svg><span>External Data Sources</span></li>
          <li><i class="twig"></i><svg><use href="#t-db"/><use href="#star"/></svg><span>External File Formats</span></li>
          <li><i class="twig"></i><svg><use href="#t-obj"/><use href="#star"/></svg><span>External Languages</span></li>
          <li><i class="twig"></i><svg><use href="#t-obj"/><use href="#star"/></svg><span>External Libraries</span></li>
          <li><i class="twig"></i><svg><use href="#t-file"/><use href="#star"/></svg><span>Files</span></li>
          <li><i class="twig"></i><svg><use href="#t-book"/><use href="#star"/></svg><span>Fulltext Catalogs</span></li>
          <li><button aria-label="Expand"></button><i class="twig"></i><svg><use href="#t-obj"/><use href="#star"/></svg><span>Fulltext Stoplists</span></li>
          <li><i class="twig"></i><svg><use href="#t-fn"/><use href="#star"/></svg><span>Functions</span></li>
          <li><button aria-label="Expand"></button><i class="twig"></i><svg><use href="#t-user"/><use href="#star"/></svg><span>Logins</span></li>
          <li><i class="twig"></i><svg><use href="#t-src"/><use href="#star"/></svg><span>Model Sources</span></li>
          <li><i class="twig"></i><svg><use href="#t-obj"/><use href="#star"/></svg><span>Naming Standards</span></li>
          <li><i class="twig"></i><svg><use href="#t-pfn"/><use href="#star"/></svg><span>Partition Functions</span></li>
          <li><i class="twig"></i><svg><use href="#t-psc"/><use href="#star"/></svg><span>Partition Schemes</span></li>
          <li><i class="twig"></i><svg viewBox="0 0 20 20"><use href="#t-db" width="20" height="20"/><path d="M13 9q4-2 4 2-1 2-2 2v5" fill="none" stroke="#e0a030" stroke-width="2.400"/><use href="#star" width="20" height="20"/></svg><span>Permissions</span></li>
          <li><button aria-label="Expand"></button><i class="twig"></i><svg><use href="#t-rel"/><use href="#star"/></svg><span>Relationships</span></li>
          <li><button aria-label="Expand"></button><i class="twig"></i><svg><use href="#t-obj"/><use href="#star"/></svg><span>Resource Pools</span></li>
          <li><button aria-label="Expand"></button><i class="twig"></i><svg><use href="#t-sch"/><use href="#star"/></svg><span>Schemas</span></li>
          <li><i class="twig"></i><svg><use href="#t-scr"/><use href="#star"/></svg><span>Script Templates</span></li>
          <li><i class="twig"></i><svg><use href="#t-seq"/><use href="#star"/></svg><span>Sequences</span></li>
          <li><i class="twig"></i><svg><use href="#t-obj"/><use href="#star"/></svg><span>Server Audit Specifications</span></li>
          <li><i class="twig"></i><svg><use href="#t-obj"/><use href="#star"/></svg><span>Server Audits</span></li>
          <li><i class="twig"></i><svg><use href="#t-proc"/><use href="#star"/></svg><span>Stored Procedures</span></li>
          <li><i class="twig"></i><svg><use href="#t-area"/><use href="#star"/></svg><span>Subject Areas</span></li>
          <li><i class="twig"></i><svg><use href="#t-key"/><use href="#star"/></svg><span>Symmetric Keys</span></li>
          <li><i class="twig"></i><svg><use href="#t-syn"/><use href="#star"/></svg><span>Synonyms</span></li>
          <li class="sel"><button aria-label="Expand"></button><i class="twig"></i><svg><use href="#t-tab"/><use href="#star"/></svg><span>Tables</span></li>
          <li><button aria-label="Expand"></button><i class="twig"></i><svg><use href="#t-theme"/><use href="#star"/></svg><span>Themes</span></li>
          <li><button aria-label="Expand"></button><i class="twig"></i><svg><use href="#t-trt"/><use href="#star"/></svg><span>Trigger Templates</span></li>
          <li><i class="twig"></i><svg><use href="#t-tr"/><use href="#star"/></svg><span>Triggers</span></li>
          <li><button aria-label="Expand"></button><i class="twig"></i><svg><use href="#t-uid"/><use href="#star"/></svg><span>User Ids</span></li>
          <li><button aria-label="Expand"></button><i class="twig"></i><svg><use href="#t-val"/><use href="#star"/></svg><span>Validation Rules</span></li>
        </ul>
        <div class="vscroll"><svg><use href="#chev"/></svg><div class="track"><i class="thumb t-tree"></i></div><svg class="down"><use href="#chev"/></svg></div>
        <div class="hscroll"><svg class="left"><use href="#chev"/></svg><div class="track"><i class="thumb h-tree"></i></div><svg class="right"><use href="#chev"/></svg></div>
      </div>
      <div class="ptabs">
        <button class="on"><svg viewBox="0 0 20 20"><path d="M3 1h9l5 5v13H3z" fill="#fdfbe8" stroke="#222" stroke-width="1.600"/><path d="M12 1v5h5" fill="#aaa" stroke="#222"/></svg>Model</button>
        <button><svg><use href="#t-area"/></svg>Subject Area</button>
      </div>
    </div>
  </aside>

  <section class="docs">
    <div class="doctabs"><button class="doctab"><span>JasminderGarcha-PersonAddr...</span><svg><use href="#crossb"/></svg></button><button class="doclist" aria-label="Documents"><i class="tri"></i></button></div>
    <div class="mdi">
      <div class="win">
        <div class="wtitle">
          <svg><use href="#logo"/></svg><h2>JasminderGarcha-PersonAddressSqlServer2019-20221011 : Physical Data Model</h2>
          <button aria-label="Minimize"><svg viewBox="0 0 16 14"><rect x="1.500" y="7" width="13" height="5" rx="1" fill="#fff" stroke="#555"/></svg></button>
          <button aria-label="Maximize"><svg viewBox="0 0 16 14"><path d="M2 2h12v10H2zM6 6h4v3H6z" fill="#fff" fill-rule="evenodd" stroke="#4a5468" stroke-width="1.300"/></svg></button>
          <button class="close" aria-label="Close"><svg viewBox="0 0 16 14"><path d="M4 3l8 8M12 3l-8 8" stroke="#4c3038" stroke-width="5"/><path d="M4 3l8 8M12 3l-8 8" stroke="#fff" stroke-width="3"/></svg></button>
        </div>
        <div class="wbody">
          <div class="canvas">
            <h3 class="ename e-addr">Address</h3>
            <table class="entity">
              <colgroup><col class="k"><col class="n"><col class="t"><col class="d"><col class="x"></colgroup>
              <thead><tr><td><svg viewBox="0 0 36 36"><path d="M11 16h23v18H11z" fill="#b9ac1c" stroke="#5e5810" stroke-width="2"/><path d="M15 20h15v10H15z" fill="#f2f0b8"/><path d="M17 23h3M22 23h7M17 27h3M22 27h7" stroke="#4a50b8" stroke-width="2"/><path d="M2 5h17v5h-4v5h-4v-4H8v6H4v-7H2z" fill="#e8a020" stroke="#6a4210" stroke-width="1.500"/><circle cx="25" cy="8" r="5.500" fill="#fff" stroke="#6a4210" stroke-width="5.500"/><circle cx="25" cy="8" r="5.500" fill="none" stroke="#eaa41e" stroke-width="3.500"/></svg></td><td>AddressId</td><td>integer</td><td>_default_</td><td>NOT NULL</td></tr></thead>
              <tbody>
                <tr><td></td><td>AddressState</td><td>char(2)</td><td>StateAbbreviation</td><td>NOT NULL (AK1.2)</td></tr>
                <tr><td></td><td>AddressCity</td><td>varchar(20)</td><td>_default_</td><td>NOT NULL (AK1.1)</td></tr>
                <tr><td></td><td>AddressZipCode</td><td>char(5)</td><td>ZipCode</td><td>NOT NULL (AK1.4)</td></tr>
                <tr><td></td><td>AddressStreet</td><td>varchar(40)</td><td>_default_</td><td>NOT NULL (AK1.3)</td></tr>
              </tbody>
            </table>
            <svg class="link" viewBox="0 0 40 184"><path d="M20 0v37M20 47v38M20 95v37M20 142v40M3 25h34M3 157h34M20 157L7 182M20 157l13 25" fill="none" stroke="#999" stroke-width="2.400"/><circle cx="20" cy="145" r="12" fill="none" stroke="#999" stroke-width="2.400"/></svg>
            <h3 class="ename e-fk">FK_Person_Address</h3>
            <h3 class="ename e-person">Person</h3>
          </div>
          <div class="vscroll"><svg><use href="#chev"/></svg><div class="track"><i class="thumb t-win"></i></div><svg class="down"><use href="#chev"/></svg></div>
          <div class="hscroll"><svg class="left"><use href="#chev"/></svg><div class="track"><i class="thumb h-win"></i></div><svg class="right"><use href="#chev"/></svg></div>
        </div>
        <div class="sheets">
          <button>Conceptual Data Model</button><button>Logical Data Model</button><button class="on">Physical Data Model</button>
        </div>
      </div>
    </div>
  </section>
</main>

<section class="docks">
  <div class="dock-head"><h2>Action Log</h2><button aria-label="Pin"><svg><use href="#pin"/></svg></button><button aria-label="Close"><svg><use href="#cross"/></svg></button></div>
  <div class="dock-head"><h2>Advisories</h2><button aria-label="Pin"><svg><use href="#pin"/></svg></button><button aria-label="Close"><svg><use href="#cross"/></svg></button></div>
  <div class="dock-head"><h2>Overview</h2><button aria-label="Pin"><svg><use href="#pin"/></svg></button><button aria-label="Close"><svg><use href="#cross"/></svg></button></div>
</section>

<footer class="status">
  <span class="s-help">For Help, press F1</span><span class="s-mart">Non-Mart Model</span><span class="s-db">SQL Server 2019</span>
  <label for="zoom">200%</label>
  <button aria-label="Zoom out"><svg viewBox="0 0 10 10"><path d="M1 5h8" stroke="#555" stroke-width="2.400"/></svg></button>
  <input id="zoom" type="range" min="0" max="100" value="96">
  <button aria-label="Zoom in"><svg viewBox="0 0 10 10"><path d="M0 5h10M5 0v10" stroke="#555" stroke-width="2.400"/></svg></button>
</footer>

<footer class="taskbar">
  <button class="start" aria-label="Start"><svg viewBox="0 0 20 20"><path d="M0 3l8-1v7H0zM9 2l11-2v9H9zM0 10h8v8l-8-1zM9 10h11v10L9 18z"/></svg></button>
  <button class="open" aria-label="File Explorer"><svg viewBox="0 0 30 30"><path d="M1 3h11l3 3h-4v3H1z" fill="#e8a317"/><path d="M1 6h28v20H1z" fill="#ffd05c"/><path d="M6 27V16h18v11h-5v-5h-8v5z" fill="#3a94e0"/></svg></button>
  <button class="open active" aria-label="erwin DM"><svg viewBox="0 0 30 30"><path fill="#00a3d3" d="M0 0h30v30H0z"/><path d="M8 5v20M15 5v20M22 5v20" stroke="#fff" stroke-width="1.500"/><path d="M5 5h5v5H5zM12 5h5v5h-5zM19 5h5v5h-5zM5 12h5v5H5zM12 12h5v5h-5zM19 12h5v5h-5zM5 19h5v5H5zM12 19h5v5h-5zM19 19h5v5h-5z" fill="#fff"/></svg></button>
  <button aria-label="Docker"><svg viewBox="0 0 30 30"><circle cx="15" cy="15" r="15" fill="#1e8fee"/><path d="M5 15h17q-1-3 1-5 2 2 2 4l2 1q-2 2-4 2-3 7-10 7-7 0-8-9z" fill="#fff"/><path d="M8 11h2v3H8zM11 11h3v3h-3zM15 11h3v3h-3zM15 8h3v2h-3z" fill="#fff"/></svg></button>
  <button aria-label="Azure Data Studio"><svg viewBox="0 0 30 30"><path d="M14 13q-3-6 3-7 2-6 8-5 4 2 3 5 4 3 1 7z" fill="#35c3ea"/><path d="M0 10v16q8 6 18 0V10z" fill="#0f6cbd"/><ellipse cx="9" cy="10" rx="9" ry="3.500" fill="#bfe6f7" stroke="#0f6cbd"/><path d="M1 20h4l3-5 3 9 2-5h4" fill="none" stroke="#fff" stroke-width="1.800"/><circle cx="21" cy="23" r="4.500" fill="#d6f2fa" stroke="#22b0d8" stroke-width="3.500" stroke-dasharray="4 1"/></svg></button>
  <button aria-label="DBeaver"><svg viewBox="0 0 30 30"><circle cx="15" cy="15" r="14" fill="#fff" stroke="#d8432b" stroke-width="2"/><path d="M3 22q4-3 4-9l2-6q-2 11 3 14l-1 7q-5-1-8-6zM18 8q5-3 8 1 1 4-2 5l-4-2zM20 15l3 2q3 6-2 11l-3 1-1-6q3-3 3-8z" fill="#3a2a24"/><circle cx="14" cy="9" r="1.600" fill="#3a2a24"/><path d="M9 6q5-5 12-2" fill="none" stroke="#3a2a24" stroke-width="1.500"/></svg></button>
  <button aria-label="Visual Studio Code"><svg viewBox="0 0 30 30"><path d="M1 10l3-2 19 15v7z" fill="#1583cf"/><path d="M1 20l3 2L23 7V0z" fill="#0a6cb6"/><path d="M22 0l8 3v24l-8 3z" fill="#25a3f0"/></svg></button>
  <button aria-label="Git"><svg viewBox="0 0 30 30"><path d="M15 0l7 7-7 7-7-7z" fill="#f07f7a"/><path d="M7 8l7 7-7 7-7-7z" fill="#84aef2"/><path d="M23 8l7 7-7 7-7-7z" fill="#8ed06a"/><path d="M15 16l7 7-7 7-7-7z" fill="#fbe08a"/><path d="M12 4l8 10M15 11v9" fill="none" stroke="#f6e9d8" stroke-width="2"/><circle cx="20" cy="15" r="2" fill="#fff"/><circle cx="15" cy="20" r="2" fill="#fff"/></svg></button>
  <button aria-label="Database tools"><svg viewBox="0 0 30 30"><path d="M4 3h14v14q-7 4-14 0z" fill="#fbc02d"/><ellipse cx="11" cy="3.500" rx="7" ry="2.500" fill="#d9a520"/><path d="M21 2h7v6M2 21v7h7" fill="none" stroke="#3f9a3c" stroke-width="3"/><path d="M14 17l11 10M25 16L14 27" stroke="#2878c8" stroke-width="3"/></svg></button>
  <button aria-label="MySQL Workbench"><svg viewBox="0 0 30 30"><rect x="1" width="28" height="30" rx="3" fill="#2d6484"/><path d="M5 6q4-3 9 1 5 4 6 10l5 4-3 1 2 4-5-4q-5-2-6-7l-3 5q-1-4-1-8-4-2-4-6z" fill="none" stroke="#d6e6ee" stroke-width="1.300"/><path d="M21 8l5-4M21 3l4 4" stroke="#fff" stroke-width="2"/></svg></button>
  <button aria-label="PowerShell"><svg viewBox="0 0 30 30"><path d="M6 4h24l-6 22H0z" fill="#3d6dcc"/><path d="M10 8l8 7-11 7M16 22h7" fill="none" stroke="#fff" stroke-width="3"/></svg></button>
  <button class="ubuntu" aria-label="Ubuntu"><svg viewBox="0 0 30 20"><path d="M5 0h19v20H5z" fill="#fff"/><circle cx="14.500" cy="10" r="5.500" fill="none" stroke="#e95420" stroke-width="2.400" stroke-dasharray="9 2"/><path d="M8 8h2v3H8zM17 3h3v2h-3zM17 15h3v2h-3z" fill="#e95420"/></svg><span>22.04</span></button>
  <button aria-label="Notepad++"><svg viewBox="0 0 30 30"><path d="M2 3h19l3 4-2 20-20 2z" fill="#f4f8ea" stroke="#567" stroke-width="1.400"/><path d="M3 2v3M6 2v3M9 2v3M12 2v3M15 2v3M18 2v3" stroke="#345"/><path d="M3 18q9-8 19 0l-2 8-17 2z" fill="#7ac82a"/><path d="M6 14q4-6 8-1 6-4 7 3-4 5-9 2-5 2-6-4z" fill="#5aae38" stroke="#222"/><path d="M28 1L18 26" stroke="#e8a030" stroke-width="2.500"/></svg></button>
  <button aria-label="Firefox"><svg viewBox="0 0 30 30"><path d="M17 0q4 3 5 7l3-1q7 9 2 17-5 7-13 7Q2 29 1 17 1 9 5 5l2 3q1-3 4-3l4 2q0-4 2-7z" fill="url(#g-fox)"/><circle cx="15" cy="16" r="7" fill="#7645d0"/><path d="M5 12q6-3 10 1-5 0-5 5-4 0-5-6z" fill="#ff9a26"/></svg></button>
  <button aria-label="PowerPoint"><svg viewBox="0 0 30 30"><circle cx="16" cy="15" r="14" fill="#d35230"/><path d="M16 1a14 14 0 0 1 14 14H16z" fill="#ff8f6b"/><path d="M16 1A14 14 0 0 0 2 15h14z" fill="#ed6c47"/><rect y="7" width="16" height="16" rx="2" fill="#b7371c"/><path d="M6 19v-8h3q3 0 3 2.500T9 16H6" fill="none" stroke="#fff" stroke-width="2.200"/></svg></button>
  <div class="tray">
    <svg viewBox="0 0 18 18"><path d="M1 13l8-8 8 8" fill="none" stroke="#111" stroke-width="1.400"/></svg>
    <svg class="wide" viewBox="0 0 20 18"><path d="M4 5v8h15V2H5M8 16h8M12 13v3M1 2h4v5H1zM3 7v9" fill="none" stroke="#111" stroke-width="1.300"/></svg>
    <svg class="wide" viewBox="0 0 22 18"><path d="M1 6h3l5-4v14l-5-4H1zM12 6q2 3 0 6M15 4q3 5 0 10M18 2q4 7 0 14" fill="none" stroke="#111" stroke-width="1.300"/></svg>
    <time>12:05 PM<br>10/12/2022</time>
    <svg class="wide" viewBox="0 0 20 20"><path d="M1 1h18v15h-6l-3 3-3-3H1z" fill="none" stroke="#111" stroke-width="1.400"/></svg>
  </div>
</footer>
</body>
</html>
```
FILE: styles.css
```css
* { box-sizing: border-box; }
body {
  margin: 0;
  min-height: 100vh;
  display: flex;
  flex-direction: column;
  background: #f0f0f0;
  color: #444;
  font: 14px/18px "Open Sans", "Noto Sans", sans-serif;
}
h1, h2, h3 { margin: 0; font: inherit; }
button { margin: 0; padding: 0; border: 0; background: none; color: inherit; font: inherit; white-space: nowrap; }
button svg { display: block; }
svg { flex: none; }
.defs { position: absolute; width: 0; height: 0; }
.tri { display: inline-block; width: 8px; height: 5px; background: currentColor; clip-path: polygon(0 0, 100% 0, 50% 100%); vertical-align: middle; }
.rise { transform: rotate(180deg); }
.sep { width: 7px; align-self: stretch; margin: 4px 0; background: linear-gradient(#d0d0d0, #d0d0d0) 3px 0 / 1px 100% no-repeat; }

/* title bar */
.titlebar { display: grid; grid-template-columns: 1fr auto 1fr; align-items: center; height: 39px; background: #2b579a; color: #fff; }
.quick { display: flex; align-items: center; gap: 8px; padding-left: 8px; }
.quick svg { width: 20px; height: 20px; }
.quick .q-logo { margin-right: 4px; }
.quick .q-arrow { width: 12px; display: flex; justify-content: center; }
.quick .q-arrow svg { width: 11px; height: 11px; }
.winctl { display: flex; justify-content: flex-end; }
.winctl button { width: 58px; height: 36px; display: grid; place-items: center; }
.winctl svg { width: 14px; height: 14px; }

/* menu */
.menu { display: flex; height: 31px; background: #2b579a; color: #fff; }
.menu button { padding: 2px 19px 0 18px; }
.menu .file { width: 80px; padding-right: 28px; }
.menu .on { width: 75px; padding: 2px 0 0; background: #f0f0f0; color: #2b579a; }
.menu-end { margin-left: auto; display: flex; align-items: center; padding-right: 5px; gap: 4px; }
.menu-end .up { width: 10px; height: 10px; margin-right: 7px; }
.menu-end .options { padding: 0 5px 0 4px; }
.menu-end .tri { margin-left: 2px; }
.menu-end .info { width: 20px; height: 20px; }

/* ribbon */
.ribbon { display: flex; height: 119px; padding-top: 7px; border-bottom: 1px solid #d0d0d0; }
.group { display: flex; flex-direction: column; justify-content: space-between; height: 104px; border-right: 1px solid #d2d2d2; }
.group h2 { text-align: center; color: #777; line-height: 18px; }
.items { display: flex; }
.items > * { flex: none; }
.g-model { width: 102px; }
.g-model .items { padding-left: 2px; }
.g-tool { width: 517px; }
.g-tool .items { padding-left: 8px; }
.g-draw { width: 164px; padding: 0 6px 0 7px; }
.g-clip { width: 322px; }
.g-clip .items { padding-left: 8px; }
.g-edit { width: 150px; }
.g-edit .items { padding-left: 8px; }
.g-vault { width: 184px; }
.g-vault .items { padding-left: 12px; }
.big { height: 85px; padding-top: 4px; display: flex; flex-direction: column; align-items: center; line-height: 16px; }
.big svg { width: 38px; height: 36px; margin-bottom: 11px; }
.big .sm { width: 28px; height: 36px; }
.g-model .big { width: 100px; }
.big .tri { width: 7px; height: 4px; }
.w1 { width: 54px; }
.w2 { width: 54px; }
.w3 { width: 76px; }
.w4 { width: 113px; }
.w5 { width: 124px; }
.w6 { width: 80px; }
.w7 { width: 50px; }
.off { color: #a0a0a0; }
.sel.big { width: 53px; background: #c5c5c5; }
.sel.big .tri { margin-top: 10px; color: #777; }
.stack { display: flex; flex-direction: column; padding-left: 6px; }
.stack button { display: flex; align-items: center; gap: 4px; height: 26px; text-align: left; }
.stack svg { width: 18px; height: 18px; }
.stack.off { padding-left: 8px; }
.stack.off + .stack { padding-left: 14px; }
.g-vault .first { padding-left: 0; }
.g-vault .stack + .stack { padding-left: 9px; }
.gallery { display: flex; height: 74px; border: 1px solid #ababab; }
.shapes { width: 128px; height: 72px; }
.spin { flex: 1; display: flex; flex-direction: column; border-left: 1px solid #ababab; background: #fff; color: #bbb; }
.spin button { flex: 1; display: flex; align-items: center; justify-content: center; border-bottom: 1px solid #ccc; }
.spin .all { border: 0; color: #555; flex-direction: column; gap: 2px; }
.spin .all::before { content: ""; width: 8px; height: 2px; background: currentColor; }

/* toolbars */
.toolbars { display: flex; height: 34px; }
.bar { display: flex; align-items: center; border: 1px solid #c8c8c8; border-left-color: #dcdcdc; height: 34px; }
.bar button { width: 28px; height: 28px; display: grid; place-items: center; }
.bar svg { width: 20px; height: 18px; }
.grip { width: 11px; height: 24px; background: radial-gradient(circle, #999 1px, transparent 1px) 4px 0 / 4px 5px; background-clip: content-box; padding: 0 2px 0 3px; }
.bar .more, .bar .dd { width: 13px; color: #aaa; }
.bar .dark { color: #666; }
.bar .more { align-items: end; padding-bottom: 4px; color: #333; }
.more::after, .dd::after { content: ""; width: 8px; height: 5px; background: currentColor; clip-path: polygon(0 0, 100% 0, 50% 100%); }
.combo { position: relative; display: flex; }
.combo::after { content: ""; position: absolute; right: 6px; top: 12px; width: 8px; height: 5px; background: #bbb; clip-path: polygon(0 0, 100% 0, 50% 100%); pointer-events: none; }
.combo select { appearance: none; width: 100%; height: 27px; margin: 0; padding: 0 3px; border: 0; border-right: 20px solid #ececec; border-radius: 0; background: #fff; color: #222; font: inherit; }
.c-font { width: 123px; margin-left: 2px; }
.c-size { width: 56px; padding-left: 1px; }
.c-mode { width: 124px; }
.c-mode select { border: 1px solid #ababab; height: 28px; }
.c-mode::after { background: #777; }
.ltr > * { display: block; width: 17px; height: 17px; border: 2px solid #777; color: #aaa; font: bold 12px/13px "Liberation Serif", serif; }
.ltr em { font-style: italic; }
.ltr > span { text-decoration: underline; }
.ink > span { text-decoration: none; border-color: #555; box-shadow: 0 3px #000; }

/* work area */
.work { flex: 1; display: flex; padding: 5px 6px 0 7px; }
.explorer { width: 344px; display: flex; flex-direction: column; }
.dock-head { display: flex; align-items: center; gap: 10px; height: 25px; padding: 0 10px 0 5px; }
.dock-head h2 { flex: 1; color: #3c67a8; }
.dock-head svg { width: 12px; height: 14px; color: #444; }
.panel { flex: 1; display: flex; flex-direction: column; border: 2px solid #b5b5b5; border-top-color: #a5a5a5; }
.ptools { display: flex; align-items: center; height: 34px; padding: 0 5px; gap: 7px; }
.ptools .sep { width: 1px; margin: 4px 0; background: #d0d0d0; }
.ptools svg { width: 20px; height: 20px; }
.treebox { flex: 1; margin: 5px 5px 0 4px; display: grid; grid-template: minmax(0, 1fr) 20px / minmax(0, 1fr) 20px; border: 1px solid #828790; background: #fafafa; }
.tree { margin: 0; padding: 0; height: 616px; overflow: hidden; list-style: none; font: 13px/20px "Liberation Sans", Arial, sans-serif; color: #333; background: repeating-linear-gradient(#999 0 1px, transparent 1px 2px) 35px 0 / 1px 100% no-repeat; }
.tree li { display: flex; align-items: center; height: 20px; padding-left: 30px; }
.tree svg { width: 20px; height: 20px; margin-right: 3px; }
.tree .twig { width: 15px; margin-left: 5px; border-top: 1px dotted #888; }
.tree button + .twig { width: 9px; margin-left: 0; }
.tree button { width: 11px; height: 11px; border: 1px solid #8a8a8a; background: linear-gradient(#2b4f9a, #2b4f9a) center / 5px 1px no-repeat, linear-gradient(#2b4f9a, #2b4f9a) center / 1px 5px no-repeat, #fff; }
.tree span { padding: 0 4px; }
.tree .sel span { background: #e2e2e2; color: #111; }
.vscroll, .hscroll { display: flex; align-items: center; background: #f0f0f0; }
.vscroll { flex-direction: column; padding: 5px 0; gap: 4px; }
.hscroll { padding: 0 4px; gap: 6px; }
.vscroll svg, .hscroll svg { width: 12px; height: 12px; }
.track { flex: 1; position: relative; align-self: stretch; }
.thumb { position: absolute; background: #cdcdcd; }
.vscroll .thumb { left: 0; right: 0; }
.hscroll .thumb { top: 0; bottom: 0; }
.down { transform: rotate(180deg); }
.left { transform: rotate(-90deg); }
.right { transform: rotate(90deg); }
.t-tree { top: 49%; height: 45%; }
.h-tree { left: 0; width: 73%; }
.ptabs { display: flex; align-items: center; gap: 14px; height: 32px; padding-left: 4px; }
.ptabs button { display: flex; align-items: center; gap: 6px; }
.ptabs svg { width: 19px; height: 19px; }
.ptabs .on { color: #2a52e0; }

/* documents */
.docs { flex: 1; min-width: 0; display: flex; flex-direction: column; margin-left: 5px; border-bottom: 1px solid #ccc; }
.doctabs { display: flex; align-items: flex-end; justify-content: space-between; height: 38px; padding-left: 3px; background: #fff; border-bottom: 1px solid #3f68ac; }
.doctab { display: flex; align-items: center; justify-content: space-between; width: 275px; height: 33px; padding: 0 5px 0 22px; background: #2b579a; color: #fff; }
.doctab svg { width: 12px; height: 12px; }
.doclist { width: 22px; height: 34px; color: #666; }
.mdi { flex: 1; display: flex; background: #e5e5e5; padding: 35px 3px 2px 3px; }
.win { flex: 1; min-width: 0; display: flex; flex-direction: column; padding: 0 8px 8px 9px; border: 1px solid #333; border-bottom: 2px solid #1c6f7c; border-radius: 8px 8px 0 0; background: linear-gradient(#9ab4d2 0, #b8d0ea 38px, #b8cfea 120px, #dbe7f5 150px, #b9d0ea 151px); }
.wtitle { display: flex; align-items: center; gap: 4px; height: 38px; padding: 9px 4px 0 2px; color: #1a1a1a; }
.wtitle > svg { width: 20px; height: 20px; }
.wtitle h2 { flex: 1; }
.wtitle button { width: 39px; height: 22px; display: grid; place-items: center; border: 1px solid #6d84a6; border-radius: 3px; background: linear-gradient(#c8d8ec 0 45%, #9db8d6 50%, #b8cfe8); box-shadow: inset 0 0 0 1px #d8e6f4; }
.wtitle .close { border-color: #64202a; background: linear-gradient(#e4a090 0 45%, #b83a26 50%, #d07460); box-shadow: inset 0 0 0 1px #e8b0a4; }
.wtitle button svg { width: 16px; height: 14px; }
.wbody { flex: 1; display: grid; grid-template: minmax(0, 1fr) 21px / minmax(0, 1fr) 24px; border: 1px solid #a0a0a0; background: #f0f0f0; }
.wbody .vscroll { padding: 6px 4px 5px 0; }
.wbody .hscroll { padding: 0 4px 2px 5px; gap: 9px; }
.canvas { position: relative; overflow: hidden; background: radial-gradient(circle, #dae4ed 1px, transparent 1px) 0 0 / 10px 10px, radial-gradient(circle, #dae4ed 1px, transparent 1px) 5px 5px / 10px 10px, #edf4fc; font: 34px/40px "Liberation Sans", Arial, sans-serif; color: #000; }
.t-win { top: 9%; height: 41%; }
.h-win { left: 0; width: 70%; }
.ename { position: absolute; line-height: 40px; text-shadow: 1px 0 currentColor; }
.e-addr { left: 75px; top: 73px; }
.e-fk { left: 615px; top: 431px; color: #999; }
.e-person { left: 66px; top: 546px; }
.entity { position: absolute; left: 75px; top: 119px; width: 1070px; table-layout: fixed; border: 2px solid #999; border-spacing: 0; background: linear-gradient(#fff, #f3f4ff 28%, #e3e9ff 50%, #c6d3ff); box-shadow: 11px 11px rgba(110, 115, 118, .5); }
.entity td { padding: 0; height: 40px; white-space: nowrap; }
.entity thead td { height: 63px; border-bottom: 2px solid #999; color: #2f4385; }
.entity tbody tr:first-child td { height: 53px; padding-top: 13px; }
.entity tbody tr:last-child td { height: 44px; padding-bottom: 4px; }
.entity svg { display: block; width: 36px; height: 36px; margin-left: 14px; }
.k { width: 53px; }
.n { width: 259px; }
.t { width: 181px; }
.d { width: 271px; }
.link { position: absolute; left: 589px; top: 363px; width: 40px; height: 184px; }
.sheets { display: flex; height: 27px; padding-left: 8px; background: #f0f0f0; color: #111; }
.sheets button { position: relative; height: 24px; padding: 0 15px 0 13px; margin-right: -10px; background: #f0f0f0; border-bottom: 1px solid #888; clip-path: polygon(0 0, 100% 0, calc(100% - 12px) 100%, 12px 100%); }
.sheets button::before, .sheets button::after { content: ""; position: absolute; top: 0; width: 12px; height: 24px; }
.sheets button::before { left: 0; background: linear-gradient(to top right, transparent 46%, #111 47% 53%, transparent 54%); }
.sheets button::after { right: 0; background: linear-gradient(to bottom right, transparent 46%, #111 47% 53%, transparent 54%); }
.sheets .on { background: #fff; }

/* bottom docks and status bar */
.docks { display: grid; grid-template-columns: repeat(3, 1fr); height: 35px; padding-right: 8px; }
.docks .dock-head { height: 34px; padding-left: 13px; padding-right: 8px; }
.status { display: flex; align-items: center; height: 29px; padding: 0 5px 0 4px; color: #666; }
.s-help { flex: 1017; }
.s-mart { flex: 495; }
.s-db { flex: 200; }
.status span { flex-basis: 0; white-space: nowrap; }
.status label { width: 48px; }
.status svg { width: 10px; height: 10px; }
.status input { appearance: none; width: 123px; height: 16px; margin: 0 4px; background: linear-gradient(#888, #888) center / 100% 1px no-repeat; }
.status input::-webkit-slider-thumb { appearance: none; width: 4px; height: 14px; background: #555; }

/* taskbar */
.taskbar { display: flex; height: 50px; background: linear-gradient(90deg, #c9e4ed 0 45%, #cbdbea 75%, #ccd3e6); color: #111; }
.taskbar button { width: 60px; margin-right: 2px; display: grid; place-items: center; }
.taskbar button svg { width: 30px; height: 30px; }
.taskbar .start { margin-right: 4px; }
.taskbar .start svg { width: 20px; height: 20px; }
.taskbar .open { border-bottom: 3px solid #0078d7; padding-top: 3px; width: 52px; margin: 0 6px 0 4px; }
.taskbar .active { background: #e9f5f9; width: 61px; margin: 0 1px 0 0; }
.taskbar .ubuntu { width: 30px; height: 30px; margin: 10px 17px 0 15px; background: #e95420; color: #fff; font-size: 11px; line-height: 10px; align-content: start; }
.taskbar .ubuntu svg { width: 30px; height: 20px; }
.tray { margin-left: auto; display: flex; align-items: center; gap: 12px; padding-right: 30px; }
.tray svg { width: 18px; height: 18px; }
.tray .wide { width: 21px; height: 20px; }
.tray time { text-align: center; line-height: 23px; margin: 0 6px 0 -2px; }
```
